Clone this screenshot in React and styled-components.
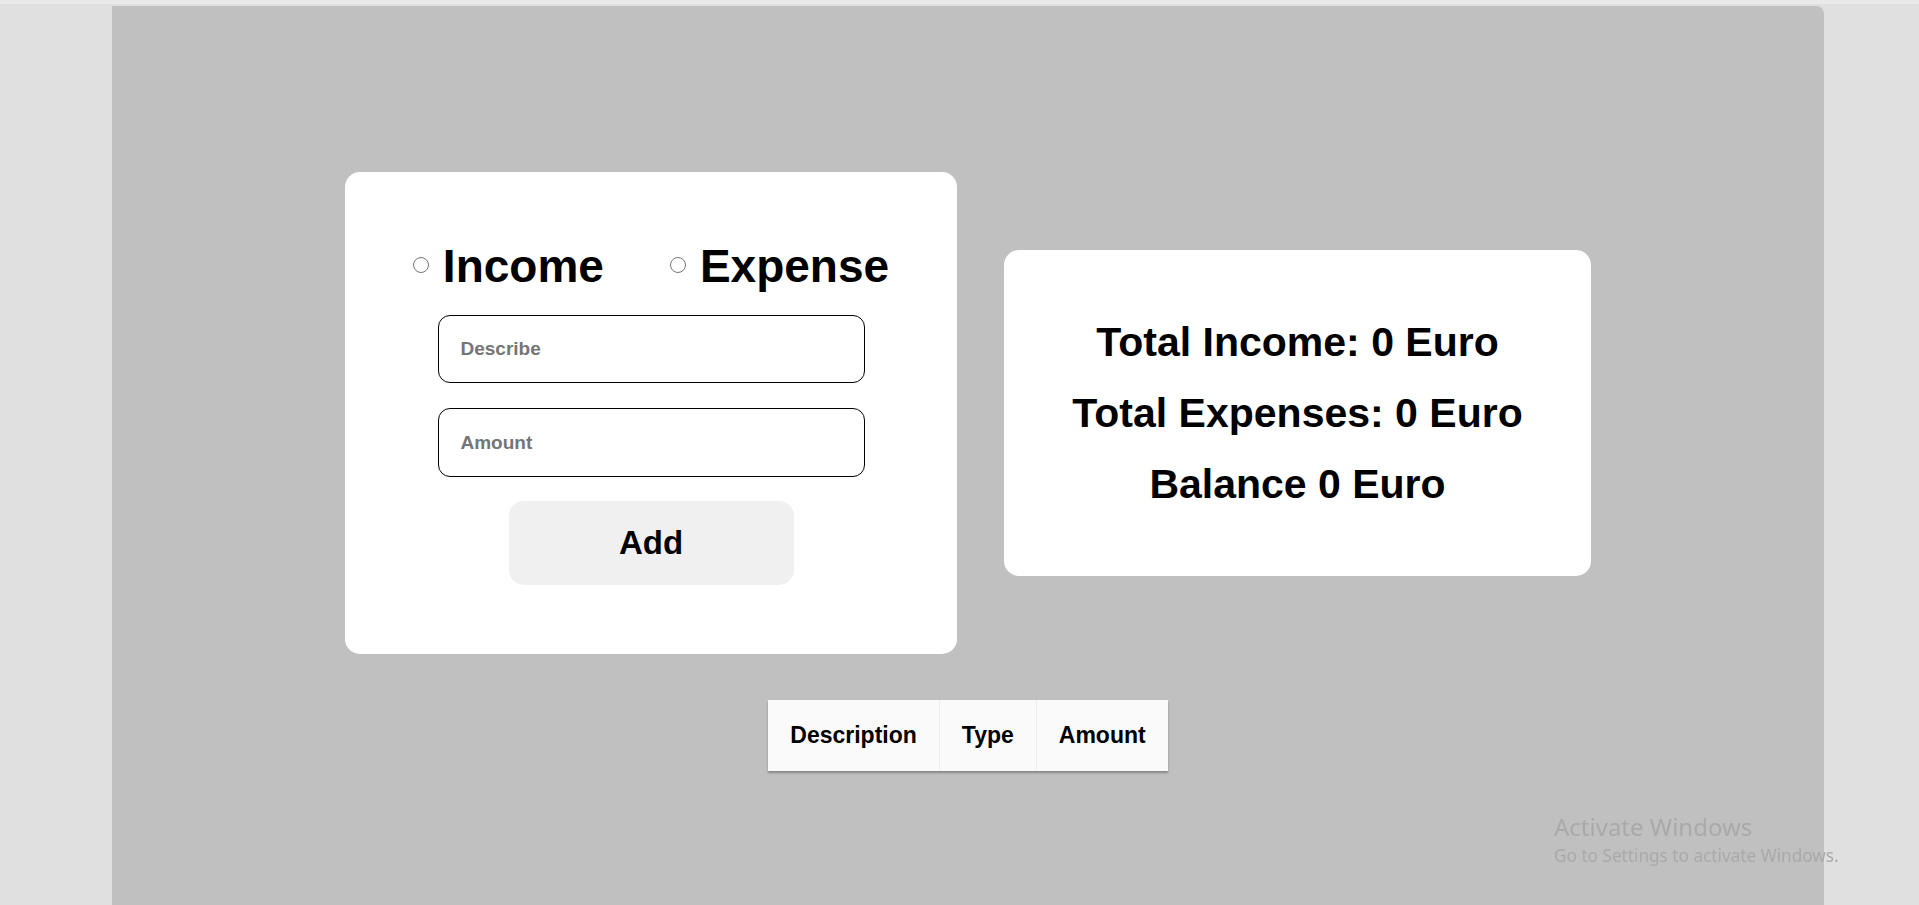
import styled, { createGlobalStyle } from "styled-components";

const GlobalStyle = createGlobalStyle`
  html, body {
    margin: 0;
    padding: 0;
  }
  body {
    background-color: #e0e0e0;
    border-top: 4px solid #e9e9e9;
    font-family: "Liberation Sans", Arial, sans-serif;
    overflow: hidden;
  }
`;

const Page = styled.div`
  margin: 2px 0 0 112px;
  width: 1712px;
  min-height: 900px;
  background-color: #c0c0c0;
  border-top-right-radius: 8px;
  padding-top: 166px;
  box-sizing: border-box;
  display: flex;
  flex-direction: column;
  align-items: center;
`;

const Cards = styled.div`
  display: flex;
  align-items: center;
  gap: 47px;
`;

const FormCard = styled.div`
  width: 612px;
  height: 482px;
  box-sizing: border-box;
  background-color: #ffffff;
  border-radius: 15px;
  padding-top: 67px;
  display: flex;
  flex-direction: column;
  align-items: center;
`;

const RadioRow = styled.div`
  display: flex;
  align-items: center;
  gap: 66px;
  height: 53px;
  margin-bottom: 23px;
`;

const RadioLabel = styled.label`
  display: flex;
  align-items: center;
  font-size: 46px;
  font-weight: 700;
  color: #000;
`;

const Radio = styled.input`
  appearance: none;
  width: 16px;
  height: 16px;
  margin: 0 14px 0 0;
  border: 1px solid #767676;
  border-radius: 50%;
  background: #fff;
  box-sizing: border-box;
  position: relative;
  top: -1px;
`;

const Field = styled.input`
  width: 427px;
  height: ${({ $h }) => $h}px;
  box-sizing: border-box;
  border: 1px solid #000;
  border-radius: 12px;
  padding: 0 22px;
  margin-bottom: ${({ $gap }) => $gap}px;
  font-family: "Liberation Sans", Arial, sans-serif;
  font-size: 19px;
  font-weight: 700;
  outline: none;

  &::placeholder {
    color: #757575;
  }
`;

const AddButton = styled.button`
  width: 285px;
  height: 84px;
  border: none;
  border-radius: 15px;
  background-color: #f0f0f0;
  font-family: "Liberation Sans", Arial, sans-serif;
  font-size: 33px;
  font-weight: 700;
  color: #000;
`;

const SummaryCard = styled.div`
  width: 587px;
  height: 326px;
  background-color: #ffffff;
  border-radius: 15px;
  display: flex;
  flex-direction: column;
  align-items: center;
  justify-content: center;
`;

const SummaryLine = styled.div`
  font-size: 41px;
  font-weight: 700;
  line-height: 71px;
  color: #000;
`;

const Table = styled.table`
  margin-top: 46px;
  border-collapse: collapse;
  background-color: #fafafa;
  box-shadow: 0 2px 2px rgba(0, 0, 0, 0.3);
`;

const Th = styled.th`
  height: 71px;
  padding: 0 22px;
  font-size: 23px;
  font-weight: 700;
  color: #000;
  border-left: 1px solid #eeeeee;

  &:first-child {
    border-left: none;
  }
`;

const Watermark = styled.div`
  position: fixed;
  left: 1554px;
  top: 810px;
  font-family: "Noto Sans", "Open Sans", sans-serif;
  color: #a9a9a9;
  pointer-events: none;
`;

const WatermarkTitle = styled.div`
  font-size: 24px;
  line-height: 34px;
`;

const WatermarkText = styled.div`
  font-size: 17.2px;
  line-height: 24px;
`;

export default function App() {
  return (
    <>
      <GlobalStyle />
      <Page>
        <Cards>
          <FormCard>
            <RadioRow>
              <RadioLabel>
                <Radio type="radio" name="type" value="income" />
                Income
              </RadioLabel>
              <RadioLabel>
                <Radio type="radio" name="type" value="expense" />
                Expense
              </RadioLabel>
            </RadioRow>
            <Field placeholder="Describe" $h={68} $gap={25} />
            <Field placeholder="Amount" $h={69} $gap={24} />
            <AddButton>Add</AddButton>
          </FormCard>
          <SummaryCard>
            <SummaryLine>Total Income: 0 Euro</SummaryLine>
            <SummaryLine>Total Expenses: 0 Euro</SummaryLine>
            <SummaryLine>Balance 0 Euro</SummaryLine>
          </SummaryCard>
        </Cards>
        <Table>
          <thead>
            <tr>
              <Th>Description</Th>
              <Th>Type</Th>
              <Th>Amount</Th>
            </tr>
          </thead>
        </Table>
      </Page>
      <Watermark>
        <WatermarkTitle>Activate Windows</WatermarkTitle>
        <WatermarkText>Go to Settings to activate Windows.</WatermarkText>
      </Watermark>
    </>
  );
}
